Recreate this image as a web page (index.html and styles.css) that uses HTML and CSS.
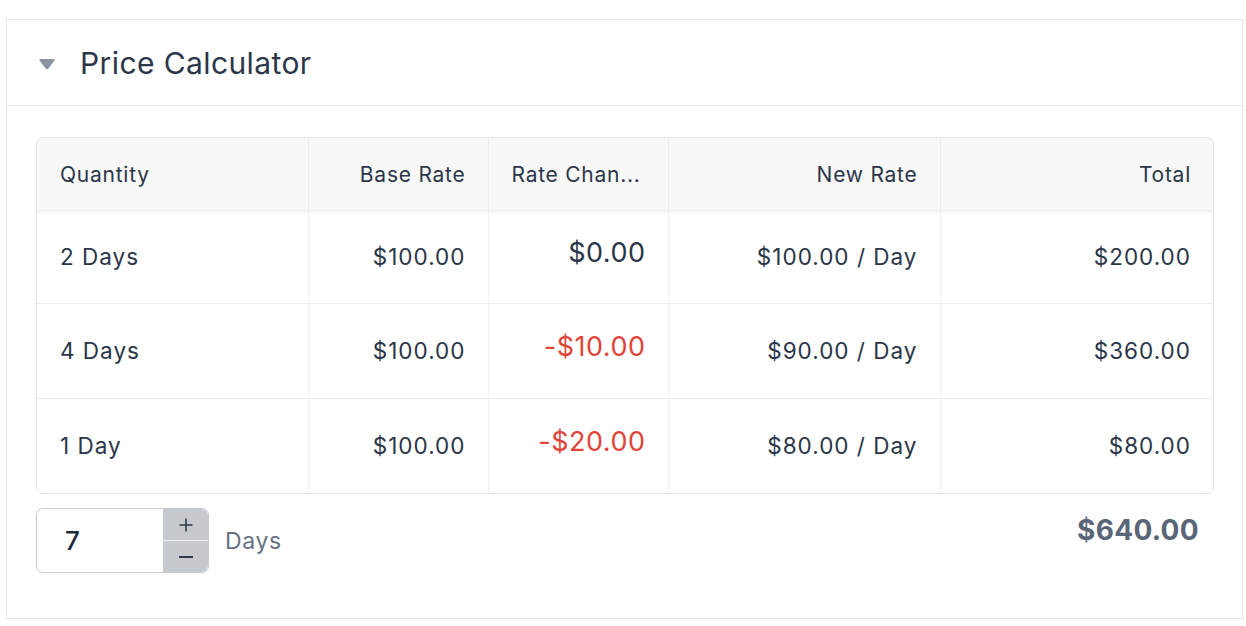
FILE: index.html
```html
<!DOCTYPE html>
<html>
<head>
<meta charset="utf-8">
<link rel="stylesheet" href="styles.css">
</head>
<body>
<section class="panel">
  <header class="panel-head">
    <svg class="caret" width="18" height="14" viewBox="0 0 18 14"><path d="M2.5 2 H15.5 Q17.5 2 16.3 3.8 L10.3 11.5 Q9 13 7.7 11.5 L1.7 3.8 Q0.5 2 2.5 2 Z" fill="#8a939e"/></svg>
    <h1 class="title">Price Calculator</h1>
  </header>
  <div class="panel-body">
    <div class="table-card">
      <table class="grid">
        <colgroup>
          <col class="c1"><col class="c2"><col class="c3"><col class="c4"><col class="c5">
        </colgroup>
        <thead>
          <tr>
            <th class="left">Quantity</th>
            <th>Base Rate</th>
            <th class="mid">Rate Chan...</th>
            <th>New Rate</th>
            <th>Total</th>
          </tr>
        </thead>
        <tbody>
          <tr>
            <td class="left">2 Days</td>
            <td>$100.00</td>
            <td class="change zero">$0.00</td>
            <td>$100.00 / Day</td>
            <td>$200.00</td>
          </tr>
          <tr>
            <td class="left">4 Days</td>
            <td>$100.00</td>
            <td class="change neg">-$10.00</td>
            <td>$90.00 / Day</td>
            <td>$360.00</td>
          </tr>
          <tr>
            <td class="left">1 Day</td>
            <td>$100.00</td>
            <td class="change neg">-$20.00</td>
            <td>$80.00 / Day</td>
            <td>$80.00</td>
          </tr>
        </tbody>
      </table>
    </div>
    <div class="footer-row">
      <div class="qty">
        <div class="stepper">
          <span class="value">7</span>
          <div class="btns">
            <button class="btn"><svg width="16" height="16" viewBox="0 0 16 16"><path d="M8 1.5V14.5M1.5 8H14.5" stroke="#2f3a4a" stroke-width="1.6" fill="none"/></svg></button>
            <button class="btn"><svg width="16" height="16" viewBox="0 0 16 16"><path d="M1 8H15" stroke="#2f3a4a" stroke-width="1.8" fill="none"/></svg></button>
          </div>
        </div>
        <span class="unit">Days</span>
      </div>
      <div class="grand">$640.00</div>
    </div>
  </div>
</section>
</body>
</html>
```

FILE: styles.css
```css
* { box-sizing: border-box; }
html, body { margin: 0; padding: 0; background: #fff; }
body {
  font-family: Inter, "Noto Sans", sans-serif;
  color: #2b3649;
  padding-top: 19px;
  padding-left: 6px;
}
.panel {
  width: 1237px;
  border: 1px solid #e6e6e6;
  border-bottom: none;
}
.panel-head {
  height: 86px;
  display: flex;
  align-items: center;
  padding-left: 31px;
  border-bottom: 1px solid #e6e6e6;
}
.caret { margin-top: 2px; }
.title {
  margin: 0 0 0 24px;
  font-size: 30px;
  font-weight: 400;
  color: #2b3649;
  letter-spacing: 0.4px;
}
.panel-body {
  padding: 31px 28px 0 29px;
  border-bottom: 1px solid #e6e6e6;
  height: 513px;
}
.table-card {
  border: 1px solid #e4e4e6;
  border-radius: 7px;
  overflow: hidden;
}
.grid {
  width: 100%;
  border-collapse: collapse;
  table-layout: fixed;
}
.c1 { width: 271px; }
.c2 { width: 180px; }
.c3 { width: 180px; }
.c4 { width: 272px; }
.c5 { width: auto; }
thead th {
  height: 72px;
  background: #f8f8f9;
  font-weight: 400;
  font-size: 21px;
  letter-spacing: 0.75px;
  text-align: right;
  padding: 0 22px 0 23px;
  color: #2b3649;
  border-left: 1px solid #ececee;
  white-space: nowrap;
  overflow: hidden;
}
thead th:first-child { border-left: none; }
th.left, td.left { text-align: left; }
th.mid { text-align: left; }
tbody td {
  height: 95px;
  font-size: 22.5px;
  letter-spacing: 1px;
  text-align: right;
  padding: 0 22px 0 23px;
  border-left: 1px solid #f1f1f3;
  border-top: 1px solid #ececee;
}
tbody td:first-child { border-left: none; }
tbody tr:first-child td {
  border-top: none;
  height: 93px;
  background: linear-gradient(to bottom, rgba(0,0,0,0.08), rgba(0,0,0,0.025) 2px, rgba(0,0,0,0) 6px);
}
tbody td.change {
  font-size: 27px;
  letter-spacing: 0.5px;
  vertical-align: middle;
  padding-bottom: 8px;
}
td.zero { color: #2b3649; }
td.neg { color: #e0453a; }
.footer-row {
  display: flex;
  align-items: flex-start;
  justify-content: space-between;
  margin-top: 14px;
}
.qty { display: flex; align-items: center; }
.stepper {
  width: 173px;
  height: 65px;
  border: 1px solid #c8cbcf;
  border-radius: 7px;
  display: flex;
  overflow: hidden;
}
.value {
  flex: 1;
  font-size: 26px;
  font-weight: 500;
  padding-left: 28px;
  line-height: 63px;
  color: #1f2a3c;
}
.btns {
  width: 45px;
  display: flex;
  flex-direction: column;
  background: #c6cacf;
  border-radius: 0 6px 6px 0;
}
.btn {
  flex: 1;
  border: none;
  background: transparent;
  display: flex;
  align-items: center;
  justify-content: center;
  padding: 0;
}
.btn + .btn { border-top: 1px solid #eef0f2; }
.unit {
  margin-left: 16px;
  font-size: 23px;
  letter-spacing: 0.6px;
  color: #667283;
}
.grand {
  font-size: 28px;
  font-weight: 700;
  letter-spacing: 0.3px;
  color: #5a6678;
  margin-top: 5px;
  margin-right: 15px;
}
```
